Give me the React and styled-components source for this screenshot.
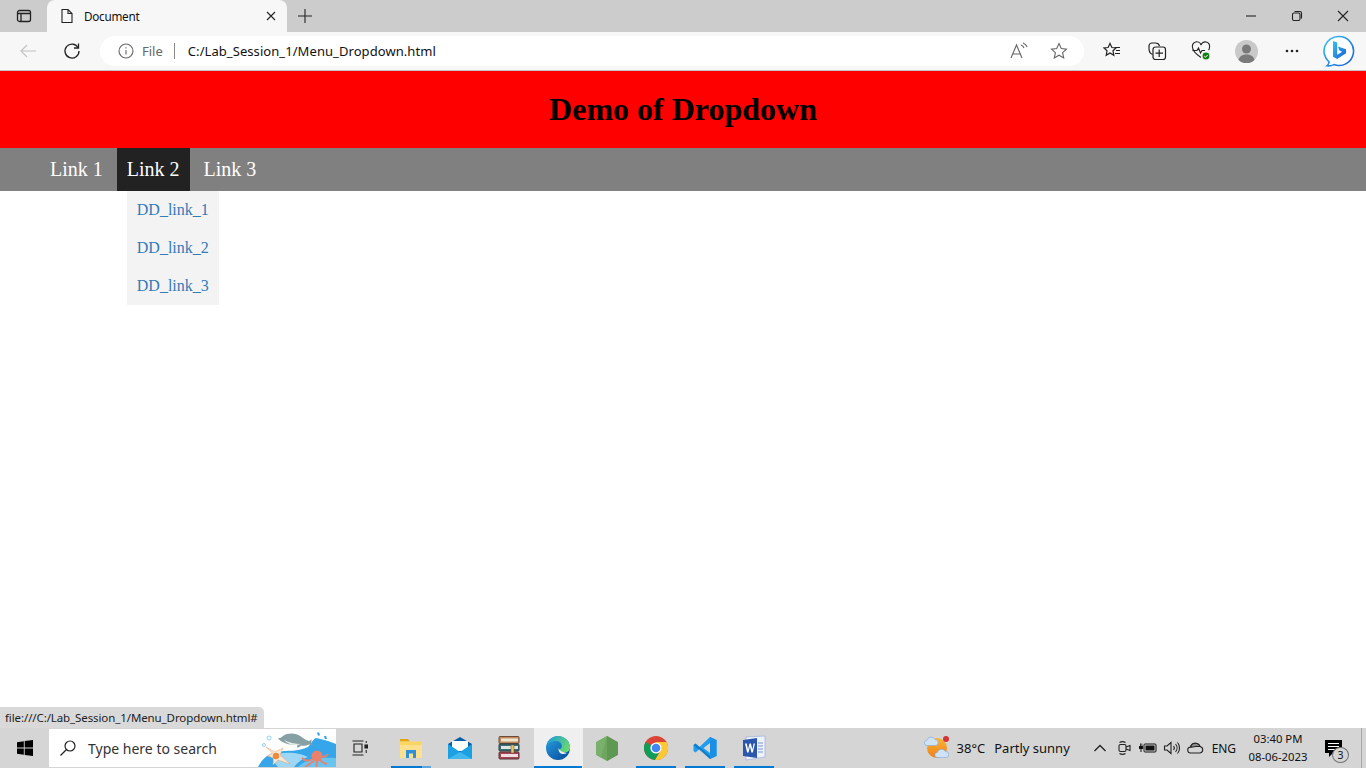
import styled, { createGlobalStyle } from "styled-components";

const GlobalStyle = createGlobalStyle`
  html, body {
    margin: 0;
    height: 100%;
    overflow: hidden;
    background: #fff;
    font-family: "Noto Sans", "Open Sans", sans-serif;
  }
`;

const Screen = styled.div`
  display: flex;
  flex-direction: column;
  height: 100vh;
`;

/* browser chrome */
const TabStrip = styled.div`
  display: flex;
  align-items: flex-end;
  height: 32px;
  background: #cccccc;
  color: #111;
`;

const StripSlot = styled.div`
  display: flex;
  align-items: center;
  justify-content: center;
  flex: none;
  width: ${(props) => props.$w}px;
  height: 32px;
`;

const Tab = styled.div`
  display: flex;
  align-items: center;
  flex: none;
  width: 240px;
  height: 32px;
  box-sizing: border-box;
  padding: 0 10px 0 12px;
  background: #f7f7f7;
  border-radius: 8px 8px 0 0;
`;

const TabTitle = styled.span`
  flex: 1;
  margin-left: 9px;
  font-size: 11.7px;
  letter-spacing: -0.25px;
`;

const Spacer = styled.div`
  flex: 1;
`;

const Toolbar = styled.div`
  display: flex;
  align-items: center;
  height: 38px;
  padding-left: 6px;
  background: #f7f7f7;
  border-bottom: 1px solid #c4c4c4;
`;

const ToolSlot = styled.div`
  display: flex;
  align-items: center;
  justify-content: center;
  flex: none;
  width: ${(props) => props.$w || 44}px;
  height: 30px;
`;

const AddressBar = styled.div`
  display: flex;
  align-items: center;
  flex: none;
  width: 984px;
  height: 30px;
  box-sizing: border-box;
  margin: 0 6px;
  padding: 0 5px 0 18px;
  background: #fff;
  border-radius: 15px;
`;

const FileLabel = styled.span`
  margin-left: 8px;
  padding-right: 11px;
  border-right: 1px solid #8a8a8a;
  font-size: 13px;
  line-height: 16px;
  color: #666;
`;

const Url = styled.span`
  flex: 1;
  margin-left: 13px;
  font-size: 13px;
  letter-spacing: 0.07px;
  color: #111;
`;

/* the page itself */
const Page = styled.main`
  position: relative;
  flex: 1;
  background: #fff;
  font-family: "Liberation Serif", "Times New Roman", serif;
`;

const Banner = styled.header`
  display: flex;
  align-items: center;
  justify-content: center;
  height: 77px;
  background: #ff0000;
`;

const Heading = styled.h1`
  margin: 0;
  font-size: 32px;
  font-weight: bold;
  color: #000;
`;

const NavBar = styled.ul`
  display: flex;
  gap: 4px;
  margin: 0;
  padding: 0 0 0 40px;
  list-style: none;
  background: #808080;
`;

const NavItem = styled.li`
  position: relative;
  padding: 10px;
  font-size: 20px;
  line-height: 23px;
  color: #fff;
  background: ${(props) => (props.$active ? "#222222" : "transparent")};
`;

const Dropdown = styled.div`
  position: absolute;
  top: 100%;
  left: 10px;
  width: 92px;
  background: #f3f3f3;
`;

const DropLink = styled.a`
  display: block;
  padding: 10px;
  font-size: 16px;
  line-height: 18px;
  color: #337ab7;
  text-decoration: none;
  white-space: nowrap;
`;

const StatusBubble = styled.div`
  position: absolute;
  left: 0;
  bottom: 0;
  width: 264px;
  height: 21px;
  box-sizing: border-box;
  padding-left: 5px;
  background: #d9d9d9;
  border-radius: 0 5px 0 0;
  font-family: "Noto Sans", sans-serif;
  font-size: 11.5px;
  line-height: 21px;
  letter-spacing: -0.1px;
  color: #222;
  white-space: nowrap;
`;

/* taskbar */
const Taskbar = styled.footer`
  display: flex;
  align-items: center;
  height: 40px;
  background: #d5d5d5;
  color: #111;
`;

const StartButton = styled.div`
  display: flex;
  align-items: center;
  justify-content: center;
  flex: none;
  width: 49px;
  height: 40px;
`;

const SearchBox = styled.div`
  position: relative;
  display: flex;
  align-items: center;
  flex: none;
  width: 287px;
  height: 38px;
  box-sizing: border-box;
  padding-left: 10px;
  background: #fff;
  overflow: hidden;
`;

const SearchText = styled.span`
  margin-left: 11px;
  font-size: 14px;
  color: #333;
`;

const SearchArt = styled.svg`
  position: absolute;
  right: 0;
  top: 0;
`;

const TaskSlot = styled.div`
  position: relative;
  display: flex;
  align-items: center;
  justify-content: center;
  flex: none;
  width: ${(props) => props.$w || 49}px;
  height: 40px;
  box-sizing: border-box;
  padding-right: ${(props) => props.$pr ?? 1}px;
  background: ${(props) => (props.$active ? "#efefef" : "transparent")};

  &::after {
    content: "";
    display: ${(props) => (props.$open ? "block" : "none")};
    position: absolute;
    left: ${(props) => (props.$active ? 0 : "4px")};
    right: ${(props) => (props.$active ? "1px" : "5px")};
    bottom: 0;
    height: 2px;
    background: ${(props) =>
      props.$stacked
        ? "linear-gradient(to right, #0078d4 78%, #5ba7e0 78%)"
        : "#0078d4"};
  }
`;

const Tray = styled.div`
  display: flex;
  align-items: center;
  flex: none;
  height: 40px;
`;

const TrayText = styled.span`
  margin-left: ${(props) => props.$ml || 0}px;
  font-size: ${(props) => props.$size || 13}px;
  letter-spacing: ${(props) => props.$track || 0}px;
  white-space: nowrap;
`;

const TraySlot = styled.div`
  display: flex;
  align-items: center;
  justify-content: center;
  flex: none;
  width: 24px;
  height: 40px;
  margin-left: ${(props) => props.$ml || 0}px;
`;

const Clock = styled.div`
  display: flex;
  flex-direction: column;
  align-items: center;
  flex: none;
  width: 84px;
  font-size: 11.3px;
  line-height: 18px;
`;

const Notify = styled.div`
  position: relative;
  display: flex;
  align-items: center;
  justify-content: center;
  flex: none;
  width: 26px;
  height: 40px;
`;

const NotifyBadge = styled.span`
  position: absolute;
  left: 12px;
  top: 19px;
  width: 17px;
  height: 16px;
  box-sizing: border-box;
  border: 1px solid #707070;
  border-radius: 50%;
  background: #d5d5d5;
  font-size: 10.5px;
  line-height: 14px;
  text-align: center;
`;

const ShowDesktop = styled.div`
  flex: none;
  width: 4px;
  height: 40px;
  margin-left: 15px;
  border-left: 1px solid #a9a9a9;
`;

const Line = ({ size = 16, children, ...rest }) => (
  <svg
    width={size}
    height={size}
    viewBox={`0 0 ${size} ${size}`}
    fill="none"
    stroke="#222"
    strokeWidth="1.1"
    {...rest}
  >
    {children}
  </svg>
);

const NodeLogo = () => (
  <svg width="22" height="25" viewBox="0 0 22 25">
    <path d="M11 0 22 6.200v12.600L11 25 0 18.800V6.200z" fill="#6da55f" />
    <path d="M11 0 22 6.200v12.600L11 25z" fill="#5f9853" />
    <path d="M11 0 0 6.200v12.600l5 3z" fill="#79b06b" />
  </svg>
);

const Chrome = () => (
  <svg width="24" height="24" viewBox="0 0 24 24">
    <circle cx="12" cy="12" r="12" fill="#db4437" />
    <path d="M12 12 1.600 6A12 12 0 0 0 11 24l5-9z" fill="#0f9d58" />
    <path d="M12 6h10.400A12 12 0 0 1 11 24l6-10z" fill="#fcc934" />
    <circle cx="12" cy="12" r="5.600" fill="#fff" />
    <circle cx="12" cy="12" r="4.300" fill="#4285f4" />
  </svg>
);

const VsCode = () => (
  <svg width="24" height="24" viewBox="0 0 24 24">
    <path d="M17 1 23.500 4v16L17 23 6.500 13 2.500 16.500.5 15V9l2-1.500 4 3.500z" fill="#1f9cf0" />
    <path d="M17 7v10l-6.500-5z" fill="#d5d5d5" />
    <path d="M17 1 23.500 4v16L17 23z" fill="#1a8fe3" />
    <path d="M.5 9l2-1.500L17 20v3z" fill="#0065a9" opacity=".55" />
  </svg>
);

const Word = () => (
  <svg width="25" height="26" viewBox="0 0 25 26">
    <path d="M4 2 23 1v21L4 25z" fill="#eef2fa" stroke="#9bb0d8" strokeWidth=".7" />
    <path d="M1 5 15 3v20L1 21z" fill="#2a57ad" />
    <path d="M3 8.500h1.800l1.200 6 1.500-6h1.400l1.500 6 1.200-6H13l-2.200 9H9.400L8 11.500l-1.500 6H5.100z" fill="#fff" />
    <path d="M16 8h5M16 11h5M16 14h5M16 17h5" stroke="#7d97cf" strokeWidth="1" />
  </svg>
);

const Edge = () => (
  <svg width="24" height="24" viewBox="0 0 24 24">
    <defs>
      <linearGradient id="edgeTop" x1="0" y1="0.300" x2="1" y2="0.700">
        <stop offset="0" stopColor="#1f9fd6" />
        <stop offset="1" stopColor="#6ddc6a" />
      </linearGradient>
      <linearGradient id="edgeBody" x1="0" y1="0" x2="0.800" y2="1">
        <stop offset="0" stopColor="#27a4e4" />
        <stop offset="1" stopColor="#0b4f9e" />
      </linearGradient>
    </defs>
    <circle cx="12" cy="12" r="12" fill="url(#edgeBody)" />
    <path
      d="M12 0a12 12 0 0 1 12 12c0 2.600-2 4.300-5 4.300-2.800 0-5.500-1-5.500-2.500 0-1 2.300-1 2.300-3.800C15.800 7 13 5 9.500 5c-3 0-6 1.500-8 3.500C3 4 7 0 12 0z"
      fill="url(#edgeTop)"
    />
    <path d="M12.500 12c1 2.500 4 4.500 8.500 5-1.500 1-3.500 1.300-5 1-2.300-.5-3.800-3-3.500-6z" fill="#efefef" />
  </svg>
);

const Folder = () => (
  <svg width="22" height="19" viewBox="0 0 22 19">
    <path d="M0 0h8l2 2.500H0z" fill="#e5a50a" />
    <path d="M0 2.500h22V19H0z" fill="#fcd462" />
    <path d="M0 6h22v13H0z" fill="#fde08d" />
    <path d="M6 11h10v8h-3v-4.500H9V19H6z" fill="#2f8fd8" />
  </svg>
);

const Mail = () => (
  <svg width="24" height="22" viewBox="0 0 24 22">
    <path d="M0 7 12 0l12 7v15H0z" fill="#0c5da8" />
    <path d="M4 4h16v10H4z" fill="#fff" />
    <path d="M0 7l12 8 12-8v15H0z" fill="#1ba1e2" />
    <path d="M0 22 12 15l12 7z" fill="#3fb8ee" />
  </svg>
);

const Books = () => (
  <svg width="22" height="24" viewBox="0 0 22 24">
    <rect x="1" y=".5" width="20" height="7" rx="1" fill="#c08a5e" stroke="#6b4a3a" />
    <rect x="3" y="2.500" width="17" height="3" fill="#efe6d2" />
    <rect x="1" y="8" width="20" height="7" rx="1" fill="#3f6f74" stroke="#2f3f44" />
    <rect x="3" y="10" width="17" height="3" fill="#dfe6e2" />
    <rect x="1" y="16" width="20" height="7" rx="1" fill="#a8435a" stroke="#5a3434" />
    <rect x="3" y="18" width="17" height="3" fill="#efe0e0" />
    <rect x="13" y="9" width="3" height="8" fill="#e9c65a" stroke="#6b4a3a" strokeWidth=".5" />
  </svg>
);

const Bing = () => (
  <svg width="32" height="32" viewBox="0 0 32 32">
    <defs>
      <linearGradient id="bingRing" x1="0" y1="0" x2="1" y2="1">
        <stop offset="0" stopColor="#35c1f1" />
        <stop offset="1" stopColor="#1b5fd6" />
      </linearGradient>
    </defs>
    <path
      d="M16 1.500a14.500 14.500 0 1 1-5 28.100c-2 1-4.500 1.400-7 1.200 1.200-1 2-2.300 2.100-3.800A14.500 14.500 0 0 1 16 1.500z"
      fill="#fff"
      stroke="url(#bingRing)"
      strokeWidth="1.600"
    />
    <path
      d="M10 6l4.200 1.500v12.200l5-3-2.800-1.300-1.500-4 8.100 2.900v4l-8.800 5.700-4.200-2.300z"
      fill="url(#bingRing)"
    />
  </svg>
);

const Cloud = ({ x, y }) => (
  <path
    transform={`translate(${x} ${y})`}
    d="M2.500 9.500a2.500 2.500 0 0 1-.3-5A4.500 4.500 0 0 1 10.500 3.500 3 3 0 0 1 11 9.500z"
    fill="#cfe2f6"
    stroke="#7fa9d6"
    strokeWidth=".6"
  />
);

const Weather = () => (
  <svg width="26" height="26" viewBox="0 0 26 26">
    <defs>
      <linearGradient id="sun" x1="0" y1="0" x2="0" y2="1">
        <stop offset="0" stopColor="#fbb733" />
        <stop offset="1" stopColor="#ef7d1a" />
      </linearGradient>
    </defs>
    <circle cx="14" cy="13" r="10" fill="url(#sun)" />
    <circle cx="23" cy="4" r="3" fill="#d13438" />
    <Cloud x={1.500} y={1} />
    <Cloud x={12} y={13} />
  </svg>
);

const SearchIllustration = () => (
  <SearchArt width="78" height="38" viewBox="0 0 78 38">
    <path d="M0 38C4 30 10 25 18 23c12-2 22 0 32-5 3-3 5-8 8-9 5 1 8 2 12 3l8 3v23z" fill="#35a6ea" />
    <path d="M14 27c6-3 14-4 22-3 6 .7 10 2 14 4-6 2-10 5-14 10H20c-3-3-5-7-6-11z" fill="#cdebf6" opacity=".7" />
    <path d="M40 38c6-6 16-10 38-9v9z" fill="#6ac4f0" />
    <path d="M20 9.500c2-.5 3.500-1 5-2.500 5-3.500 13-3 18 .5 2.500 2 5 4 8 4.500l3-1.500-1 3 2 3-4-1c-2.500 1.200-5 1.500-8 1-1 1.500-2.500 2-4 2l.5-2.500C31 16 24 14 20 9.500z" fill="#86a0a4" />
    <path d="M26 11c5 2.500 11 4 17 4-5 2-13 1-17-4z" fill="#e8eeee" />
    <circle cx="11" cy="9" r="2" fill="none" stroke="#8fd0ef" strokeWidth="1" />
    <circle cx="6" cy="16" r="1.500" fill="none" stroke="#8fd0ef" strokeWidth="1" />
    <path d="M60 3.500l1 3M67 7l1 3" stroke="#35a6ea" strokeWidth="2.200" />
    <path d="M8 18l9 5 8-4-3 7 10 9-12-4-5 5 .5-7-6-2 5-3z" fill="#f8e8d8" stroke="#e9a26a" strokeWidth=".5" />
    <circle cx="18" cy="27" r="3.200" fill="#ee8a3c" />
    <circle cx="59" cy="27" r="5.500" fill="#e8826c" />
    <path d="M55 30c-4 2-7 3-11-1M56 32c-3 2-6 4-9 6M59 32c0 2 0 4-1 6M62 31c2 2 4 4 7 4M64 28c2 0 4 0 6-3" stroke="#e8826c" strokeWidth="1.800" fill="none" />
  </SearchArt>
);

const App = () => {
  return (
    <Screen>
      <GlobalStyle />
      <TabStrip>
        <StripSlot $w={47}>
          <Line>
            <rect x="1.500" y="2.500" width="13" height="11" rx="2" strokeWidth="1.300" />
            <path d="M1.500 5.500h13M5 5.500v8" strokeWidth="1.300" />
          </Line>
        </StripSlot>
        <Tab>
          <Line size={16}>
            <path d="M3 1.500h6l4 4v9H3zM9 1.500v4h4" />
          </Line>
          <TabTitle>Document</TabTitle>
          <Line size={12}>
            <path d="M2 2l8 8M10 2l-8 8" />
          </Line>
        </Tab>
        <StripSlot $w={36}>
          <Line size={16}>
            <path d="M8 1v14M1 8h14" />
          </Line>
        </StripSlot>
        <Spacer />
        <StripSlot $w={46}>
          <Line size={12}>
            <path d="M1 6h10" />
          </Line>
        </StripSlot>
        <StripSlot $w={46}>
          <Line size={12}>
            <rect x="1.500" y="3" width="7.500" height="7.500" rx="1.500" />
            <path d="M3.500 1.500h5.500a1.500 1.500 0 0 1 1.500 1.500v5.500" />
          </Line>
        </StripSlot>
        <StripSlot $w={46}>
          <Line size={12}>
            <path d="M1 1l10 10M11 1 1 11" />
          </Line>
        </StripSlot>
      </TabStrip>

      <Toolbar>
        <ToolSlot>
          <Line size={18} stroke="#c2c2c2">
            <path d="M17 9H2M8 3 2 9l6 6" />
          </Line>
        </ToolSlot>
        <ToolSlot>
          <Line size={18} strokeWidth="1.300">
            <path d="M15 5.500A7 7 0 1 0 16 9" />
            <path d="M15.500 1.500v4.500H11" />
          </Line>
        </ToolSlot>
        <AddressBar>
          <Line size={16} stroke="#666">
            <circle cx="8" cy="8" r="7" />
            <path d="M8 7v4.500M8 4.300v1.300" />
          </Line>
          <FileLabel>File</FileLabel>
          <Url>C:/Lab_Session_1/Menu_Dropdown.html</Url>
          <ToolSlot $w={40}>
            <Line size={20} stroke="#666">
              <path d="M2 17 7.500 4 13 17M4 13h7" />
              <path d="M12 4c1.500.5 2.500 1.500 3 3M14 2c2 .7 3.500 2.200 4 4" />
            </Line>
          </ToolSlot>
          <ToolSlot $w={40}>
            <Line size={18} stroke="#666">
              <path d="M9 1.500l2.300 5 5.200.6-3.900 3.500 1.100 5.300L9 13.200l-4.700 2.700 1.100-5.300L1.500 7.100l5.200-.6z" />
            </Line>
          </ToolSlot>
        </AddressBar>
        <ToolSlot $w={44}>
          <Line size={20} strokeWidth="1.200">
            <path d="M8 2.500l1.900 4 4.100.5-3 2.800.8 4.500L8 12l-3.800 2.300.8-4.500-3-2.800 4.100-.5z" />
            <path d="M13 6.500h5M14 9.500h4M13 12.500h5" />
          </Line>
        </ToolSlot>
        <ToolSlot $w={45}>
          <Line size={20} strokeWidth="1.200">
            <path d="M5.500 13.500C3 12.500 2 10 2 7.500V5a3 3 0 0 1 3-3h3.500c2 0 3.500 1 4 3" />
            <rect x="6" y="6" width="12.500" height="12.500" rx="2.500" />
            <path d="M12.200 8.500v7.500M8.500 12.200H16" />
          </Line>
        </ToolSlot>
        <ToolSlot $w={44}>
          <svg width="20" height="20" viewBox="0 0 20 20" fill="none" stroke="#222" strokeWidth="1.100">
            <path d="M10 16.500C5 13 1.500 10 1.500 6.200A4 4 0 0 1 10 4.200a4 4 0 0 1 8.500 2c0 1-.3 2-.8 3" />
            <path d="M1.500 9.500H6l1.500-2.500 2 5L11 9.500h3" />
            <circle cx="15" cy="15" r="4" fill="#107c10" stroke="#f7f7f7" />
            <path d="M13.200 15l1.300 1.300 2.300-2.500" stroke="#fff" strokeWidth="1" />
          </svg>
        </ToolSlot>
        <ToolSlot $w={46}>
          <svg width="23" height="23" viewBox="0 0 23 23">
            <circle cx="11.500" cy="11.500" r="11.500" fill="#c9c9c9" />
            <circle cx="11.500" cy="9" r="4.500" fill="#7a7a7a" />
            <path d="M3.500 20c1-4 4-5.500 8-5.500s7 1.500 8 5.500a11.500 11.500 0 0 1-16 0z" fill="#7a7a7a" />
          </svg>
        </ToolSlot>
        <ToolSlot $w={46}>
          <svg width="14" height="4" viewBox="0 0 14 4" fill="#222">
            <circle cx="2" cy="2" r="1.300" />
            <circle cx="7" cy="2" r="1.300" />
            <circle cx="12" cy="2" r="1.300" />
          </svg>
        </ToolSlot>
        <ToolSlot $w={48}>
          <Bing />
        </ToolSlot>
      </Toolbar>

      <Page>
        <Banner>
          <Heading>Demo of Dropdown</Heading>
        </Banner>
        <NavBar>
          <NavItem>Link 1</NavItem>
          <NavItem $active>
            Link 2
            <Dropdown>
              <DropLink href="#">DD_link_1</DropLink>
              <DropLink href="#">DD_link_2</DropLink>
              <DropLink href="#">DD_link_3</DropLink>
            </Dropdown>
          </NavItem>
          <NavItem>Link 3</NavItem>
        </NavBar>
        <StatusBubble>file:///C:/Lab_Session_1/Menu_Dropdown.html#</StatusBubble>
      </Page>

      <Taskbar>
        <StartButton>
          <svg width="16" height="16" viewBox="0 0 16 16" fill="#000">
            <path d="M0 2.200 6.800 1.200v6.300H0zM7.700 1.100 16 0v7.500H7.700zM0 8.500h6.800v6.300L0 13.800zM7.700 8.500H16V16l-8.300-1.100z" />
          </svg>
        </StartButton>
        <SearchBox>
          <Line size={18} strokeWidth="1.200">
            <circle cx="11" cy="7" r="5" />
            <path d="M7.500 10.500 1.500 16.500" />
          </Line>
          <SearchText>Type here to search</SearchText>
          <SearchIllustration />
        </SearchBox>
        <TaskSlot $w={51} $pr={3}>
          <Line size={16} strokeWidth="1.100">
            <path d="M.5 1h11M.5 15h11M2 4h8v8H2z" />
            <rect x="13" y="5" width="2.500" height="3" fill="#222" />
            <path d="M14.200 10v3M14.200 1v2" />
          </Line>
        </TaskSlot>
        <TaskSlot $open $stacked><Folder /></TaskSlot>
        <TaskSlot><Mail /></TaskSlot>
        <TaskSlot><Books /></TaskSlot>
        <TaskSlot $open $active><Edge /></TaskSlot>
        <TaskSlot><NodeLogo /></TaskSlot>
        <TaskSlot $open><Chrome /></TaskSlot>
        <TaskSlot $open><VsCode /></TaskSlot>
        <TaskSlot $open><Word /></TaskSlot>
        <Spacer />
        <Tray>
          <Weather />
          <TrayText $ml={8}>38°C</TrayText>
          <TrayText $ml={9}>Partly sunny</TrayText>
          <TraySlot $ml={18}>
            <Line size={14} strokeWidth="1.300">
              <path d="M1.500 10 7 4.500 12.500 10" />
            </Line>
          </TraySlot>
          <TraySlot>
            <Line size={16}>
              <rect x="3" y="4.500" width="7" height="7" rx="1.500" />
              <path d="M10 7l4-1.500v5L10 9M3.500 2.500a6 6 0 0 1 6 0M3.500 13.500a6 6 0 0 0 6 0" />
            </Line>
          </TraySlot>
          <TraySlot>
            <svg width="18" height="12" viewBox="0 0 18 12" fill="#111">
              <rect x="5" y="2" width="12" height="8" rx="1" fill="none" stroke="#111" />
              <rect x="6.500" y="3.500" width="9" height="5" />
              <path d="M0 4h4v3H0zM1 1.500h.8V4H1zM2.500 1.500h.8V4h-.8zM1.500 7h1v3h-1z" />
            </svg>
          </TraySlot>
          <TraySlot>
            <Line size={18}>
              <path d="M1.500 7v4h2.500l4 3.500v-11L4 7zM10.500 7a3 3 0 0 1 0 4M12.500 5a6 6 0 0 1 0 8M14.500 3.500a8.500 8.500 0 0 1 0 11" />
            </Line>
          </TraySlot>
          <TraySlot>
            <svg width="17" height="12" viewBox="0 0 17 12" fill="none" stroke="#222" strokeWidth="1.100">
              <path d="M4 11a3 3 0 0 1-.5-6A5 5 0 0 1 13 4.500a3.300 3.300 0 0 1 0 6.500z" />
              <path d="M3.500 5A5 5 0 0 1 13 4.500H9C6 4.500 4.500 5.500 3.500 5z" fill="#8a8a8a" />
            </svg>
          </TraySlot>
          <TrayText $ml={4} $size={12} $track={-0.1}>ENG</TrayText>
          <Clock>
            <span>03:40 PM</span>
            <span>08-06-2023</span>
          </Clock>
          <Notify>
            <svg width="17" height="17" viewBox="0 0 17 17">
              <path d="M0 0h17v13H8l-4 4v-4H0z" fill="#000" />
              <path d="M3 3.500h11M3 6.500h11M3 9.500h7" stroke="#fff" />
            </svg>
            <NotifyBadge>3</NotifyBadge>
          </Notify>
          <ShowDesktop />
        </Tray>
      </Taskbar>
    </Screen>
  );
};

export default App;
